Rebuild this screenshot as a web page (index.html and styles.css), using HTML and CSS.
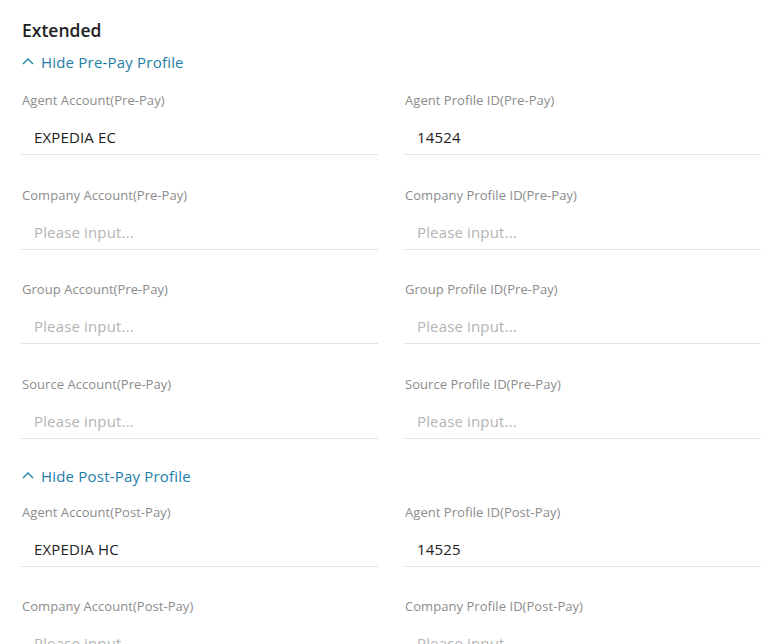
FILE: index.html
```html
<!DOCTYPE html>
<html>
<head>
<meta charset="utf-8">
<link rel="stylesheet" href="styles.css">
</head>
<body>
<div class="page">
  <h2 class="title">Extended</h2>

  <div class="toggle">
    <svg class="chev" width="12" height="8" viewBox="0 0 12 8"><path d="M1 7 L6 2 L11 7" fill="none" stroke="currentColor" stroke-width="1.3"/></svg>
    <span>Hide Pre-Pay Profile</span>
  </div>
  <div class="grid">
    <div class="field"><div class="label">Agent Account(Pre-Pay)</div><div class="input">EXPEDIA EC</div></div>
    <div class="field"><div class="label">Agent Profile ID(Pre-Pay)</div><div class="input">14524</div></div>
    <div class="field"><div class="label">Company Account(Pre-Pay)</div><div class="input ph">Please input...</div></div>
    <div class="field"><div class="label">Company Profile ID(Pre-Pay)</div><div class="input ph">Please input...</div></div>
    <div class="field"><div class="label">Group Account(Pre-Pay)</div><div class="input ph">Please input...</div></div>
    <div class="field"><div class="label">Group Profile ID(Pre-Pay)</div><div class="input ph">Please input...</div></div>
    <div class="field"><div class="label">Source Account(Pre-Pay)</div><div class="input ph">Please input...</div></div>
    <div class="field"><div class="label">Source Profile ID(Pre-Pay)</div><div class="input ph">Please input...</div></div>
  </div>

  <div class="toggle post">
    <svg class="chev" width="12" height="8" viewBox="0 0 12 8"><path d="M1 7 L6 2 L11 7" fill="none" stroke="currentColor" stroke-width="1.3"/></svg>
    <span>Hide Post-Pay Profile</span>
  </div>
  <div class="grid post-grid">
    <div class="field"><div class="label">Agent Account(Post-Pay)</div><div class="input">EXPEDIA HC</div></div>
    <div class="field"><div class="label">Agent Profile ID(Post-Pay)</div><div class="input">14525</div></div>
    <div class="field"><div class="label">Company Account(Post-Pay)</div><div class="input ph">Please input...</div></div>
    <div class="field"><div class="label">Company Profile ID(Post-Pay)</div><div class="input ph">Please input...</div></div>
  </div>
</div>
</body>
</html>
```

FILE: styles.css
```css
html, body {
  margin: 0;
  padding: 0;
  background: #ffffff;
}
body {
  font-family: "Open Sans", "Noto Sans", sans-serif;
  color: #222222;
}
.page {
  padding: 18px 19px 0 21px;
}
.title {
  margin: 0;
  font-size: 17.5px;
  font-weight: 600;
  line-height: 24px;
  color: #222222;
  padding-left: 1px;
}
.toggle {
  display: flex;
  align-items: center;
  gap: 7px;
  margin-top: 10px;
  color: #1d7ea8;
  font-size: 15px;
  letter-spacing: 0.2px;
  line-height: 20px;
  padding-left: 1px;
}
.toggle.post {
  margin-top: 27px;
}
.chev {
  display: block;
  margin-top: -2px;
}
.grid {
  display: grid;
  grid-template-columns: 357px 357px;
  column-gap: 26px;
  row-gap: 30.6px;
  margin-top: 19px;
}
.grid.post-grid {
  margin-top: 17px;
}
.label {
  font-size: 13px;
  line-height: 18px;
  letter-spacing: 0.05px;
  color: #8c8c8c;
  padding-left: 1px;
}
.input {
  margin-top: 9px;
  height: 36px;
  line-height: 39px;
  border-bottom: 1px solid #e3e3e3;
  font-size: 15px;
  letter-spacing: 0.15px;
  color: #222222;
  padding-left: 13px;
  box-sizing: content-box;
}
.input.ph {
  color: #b4b4b4;
}
```
